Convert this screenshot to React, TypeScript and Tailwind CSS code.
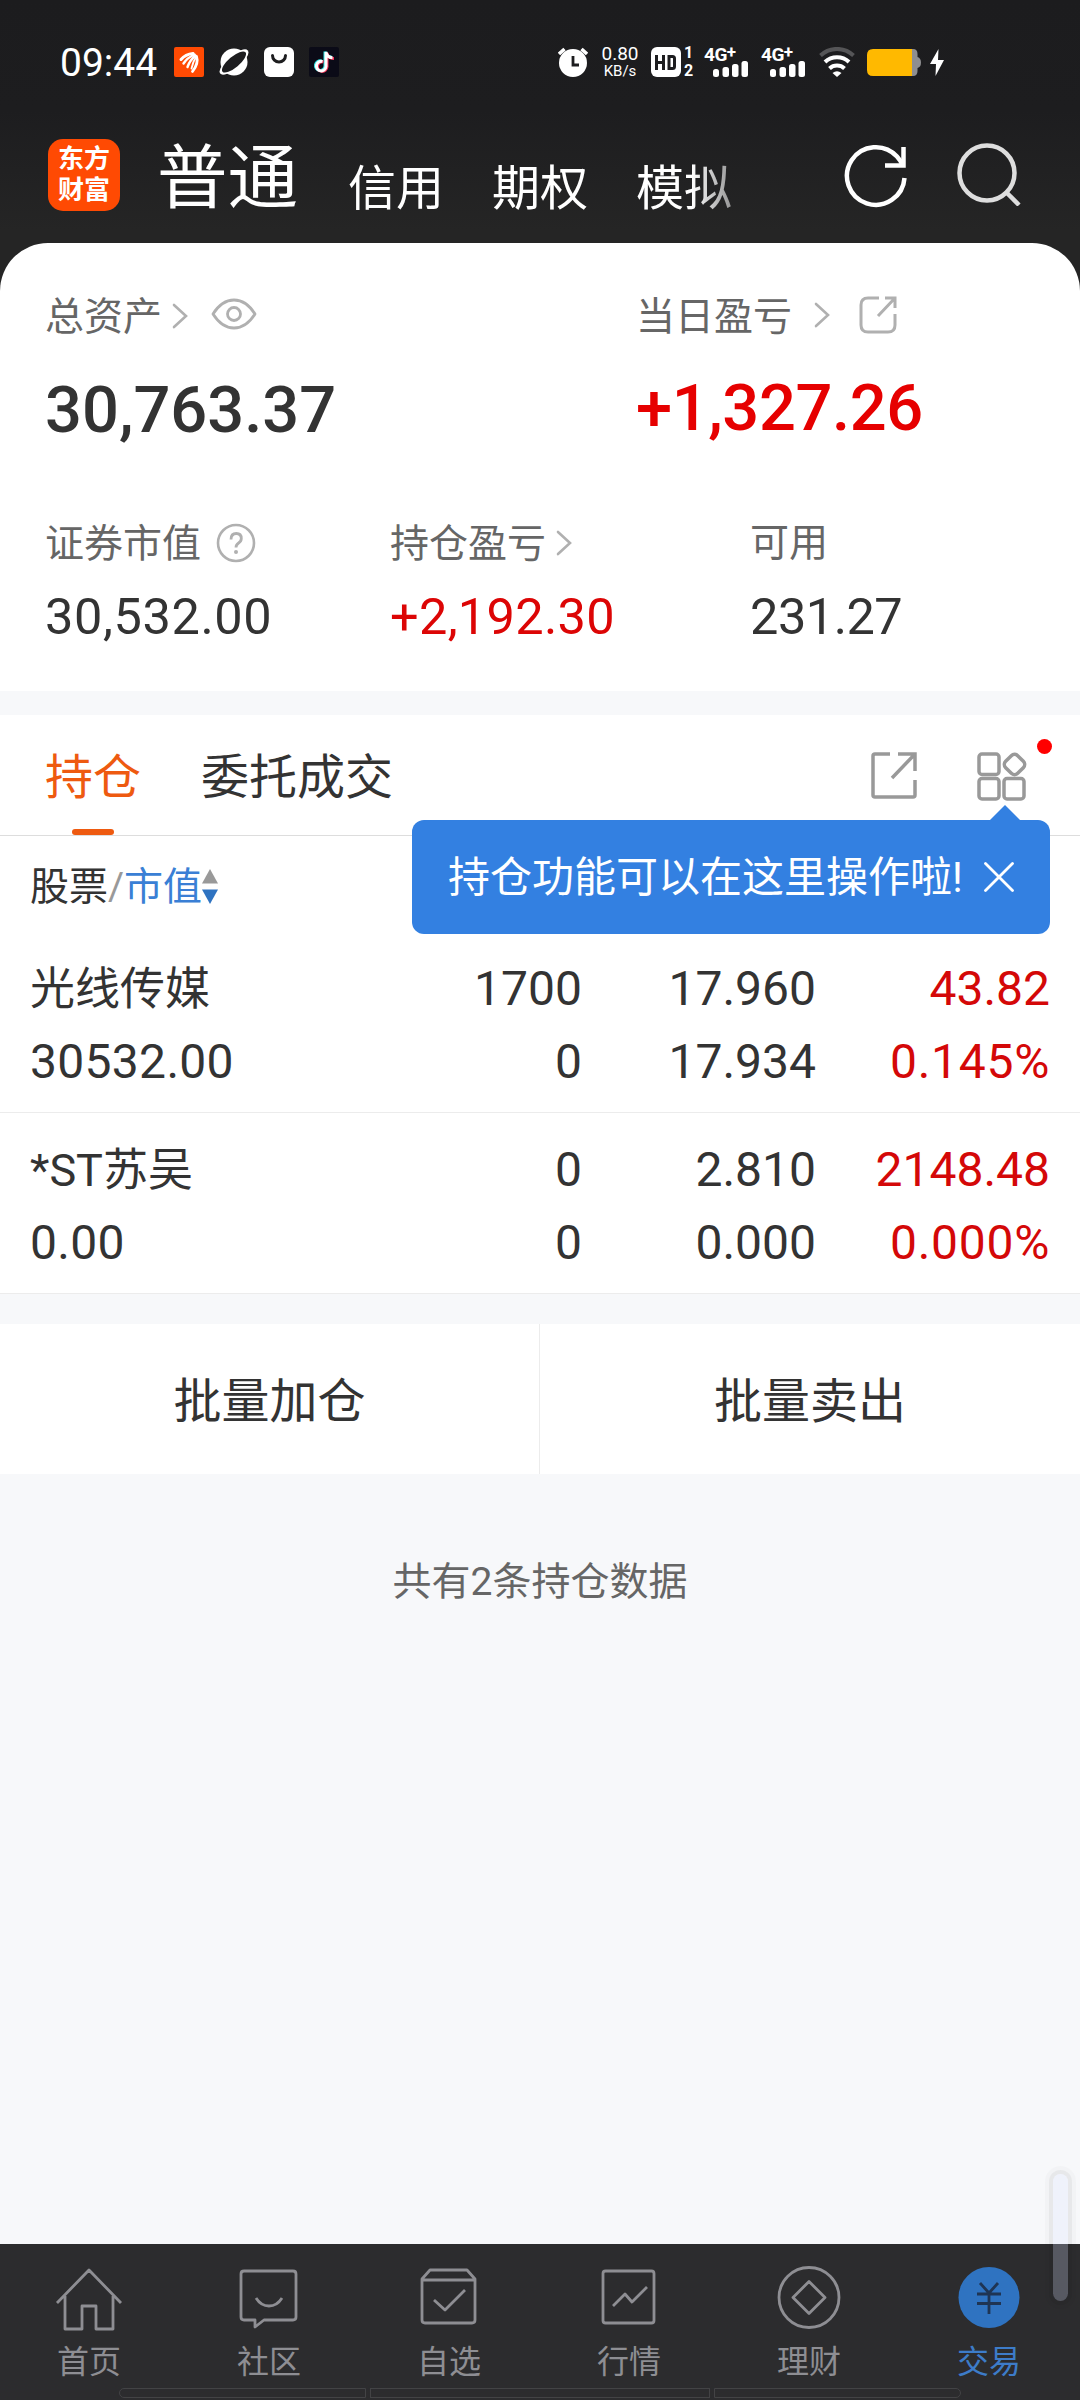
import { ReactNode } from 'react';
import clsx from 'clsx';

interface Holding {
  name: string;
  marketValue: string;
  amount: string;
  available: string;
  price: string;
  cost: string;
  profit: string;
  profitRate: string;
}

const holdings: Holding[] = [
  {
    name: '光线传媒',
    marketValue: '30532.00',
    amount: '1700',
    available: '0',
    price: '17.960',
    cost: '17.934',
    profit: '43.82',
    profitRate: '0.145%',
  },
  {
    name: '*ST苏吴',
    marketValue: '0.00',
    amount: '0',
    available: '0',
    price: '2.810',
    cost: '0.000',
    profit: '2148.48',
    profitRate: '0.000%',
  },
];

function ChevronRight({ className }: { className?: string }) {
  return (
    <svg className={className} width="16" height="26" viewBox="0 0 16 26" fill="none" stroke="#b0b0b0" strokeWidth="2.6" strokeLinecap="round">
      <path d="M2 2l12 11L2 24" />
    </svg>
  );
}

function SignalIcon() {
  return (
    <div className="flex w-[45px] h-[30px] flex-col">
      <span className="h-[14px] text-[19px] leading-[15px] font-bold tracking-[-0.5px]">
        4G<span className="relative -top-[3px] text-[17px]">+</span>
      </span>
      <svg className="ml-[9px]" width="36" height="16" viewBox="0 0 36 16" fill="#fff">
        <rect x="0" y="8" width="6" height="8" rx="2.5" />
        <rect x="9.5" y="6" width="6.5" height="10" rx="2.5" />
        <rect x="19" y="3" width="6.5" height="13" rx="2.5" />
        <rect x="28.500" y="0" width="6.500" height="16" rx="2.5" />
      </svg>
    </div>
  );
}

function StatusBar() {
  return (
    <div className="flex h-[124px] items-center pl-[60px] text-white">
      <span className="mt-[2px] w-[114px] text-[39px] leading-[40px]">09:44</span>
      <svg className="mr-[15px]" width="30" height="30" viewBox="0 0 30 30">
        <rect width="30" height="30" rx="2" fill="#ff4a03" />
        <g fill="none" stroke="#fff" strokeWidth="2.400" strokeLinecap="round">
          <path d="M7 12.500C10 9 14 7 19 6.500" strokeWidth="3" />
          <path d="M9.500 16.500C12 12.500 16 9.500 20.500 7.500" />
          <path d="M13.500 20C15 15.500 18 11.500 21.500 8.500" />
          <path d="M18.500 24.500C22 20 24.500 15 22.500 9.500" strokeWidth="2.800" />
          <path d="M17.500 21.500C18.500 17 20 13 22 10" strokeWidth="1.800" />
        </g>
      </svg>
      <svg className="mr-[15px]" width="30" height="30" viewBox="0 0 30 30">
        <circle cx="15" cy="15" r="13.500" fill="#fff" />
        <g transform="rotate(-40 15 15)">
          <ellipse cx="15" cy="15" rx="18" ry="6.500" fill="#fff" />
          <ellipse cx="15" cy="15" rx="15" ry="5.500" fill="#1d1d1f" />
        </g>
      </svg>
      <svg className="mr-[15px]" width="30" height="30" viewBox="0 0 30 30">
        <rect width="30" height="30" rx="6" fill="#fff" />
        <path d="M8.500 8.500a6.500 6.500 0 0 0 13 0" fill="none" stroke="#1d1d1f" strokeWidth="3" strokeLinecap="round" />
      </svg>
      <svg width="30" height="30" viewBox="0 0 30 30" fill="none" strokeWidth="3">
        <rect width="30" height="30" rx="2" fill="#0b0b17" />
        <path d="M12.500 14a4.800 4.800 0 1 0 3.500 5V4.500c.5 3.500 3 5.500 6.500 5.500" stroke="#35e4e4" />
        <path d="M14.500 15a4.800 4.800 0 1 0 3.500 5V6c.5 3.500 3 5.500 7 5.500" stroke="#f5375b" />
        <path d="M13.500 14.500a4.800 4.800 0 1 0 3.500 5V5c.5 3.500 3 5.500 6.500 5.700" stroke="#fff" />
      </svg>

      <svg className="ml-[219px]" width="30" height="30" viewBox="0 0 30 30" fill="none" stroke="#fff">
        <circle cx="15" cy="16" r="14" fill="#fff" stroke="none" />
        <path d="M1 7l5.500-5M29 7l-5.500-5" strokeWidth="3.500" />
        <path d="M15 9v9h6" stroke="#1d1d1f" strokeWidth="2.800" />
      </svg>
      <div className="ml-[12px] flex w-[40px] flex-col items-center">
        <span className="text-[19px] leading-[18px]">0.80</span>
        <span className="text-[15px] leading-[17px]">KB/s</span>
      </div>
      <div className="ml-[11px] flex h-[30px] w-[30px] items-center justify-center rounded-[6px] bg-white">
        <svg width="22" height="15" viewBox="0 0 22 15" fill="none" stroke="#1d1d1f" strokeWidth="3">
          <path d="M1.500 0v15M8.500 0v15M1.500 7.500h7M14 1.500h3.500q2 0 2 2v8q0 2-2 2H14z" />
        </svg>
      </div>
      <div className="ml-[2px] flex w-[11px] flex-col items-center text-[16px] leading-[18px] font-bold">
        <span>1</span>
        <span>2</span>
      </div>
      <div className="ml-[10px] flex gap-[12px]">
        <SignalIcon />
        <SignalIcon />
      </div>
      <svg className="ml-[13px]" width="36" height="30" viewBox="0 0 36 30" fill="none" strokeWidth="4">
        <path d="M1.500 8.500a24 24 0 0 1 33 0" stroke="#555557" />
        <path d="M6 15a17.500 17.500 0 0 1 24 0" stroke="#fff" />
        <path d="M10.500 21.500a11 11 0 0 1 15 0" stroke="#fff" />
        <path d="M13.500 26q4.500-3.500 9 0L18 30z" fill="#fff" />
      </svg>
      <svg className="ml-[12px]" width="54" height="27" viewBox="0 0 54 27">
        <path d="M44 0h2q4.500 0 4.500 5v3q3.500 1 3.500 5.500T50.500 19v3q0 5-4.500 5h-2z" fill="#8e8e90" />
        <path d="M6 0h39v27H6q-6 0-6-6V6q0-6 6-6z" fill="#ffb900" />
      </svg>
      <svg className="ml-[9px]" width="14" height="27" viewBox="0 0 14 27" fill="#fff">
        <path d="M8.500 0L0 15h6L5.500 27 14 11H8z" />
      </svg>
    </div>
  );
}

function Header() {
  return (
    <div className="flex h-[119px] pl-[48px] text-white">
      <div className="mt-[15px] flex h-[72px] w-[72px] flex-col items-center justify-center rounded-[15px] bg-[#ff4a03] text-[26px] leading-[31px] font-bold">
        <span>东方</span>
        <span>财富</span>
      </div>
      <div className="ml-[37px] flex w-[612px] whitespace-nowrap [mask-image:linear-gradient(to_right,#000_535px,rgba(0,0,0,0.5)_576px,transparent_600px)]">
        <span className="mt-[14px] text-[70.500px] leading-[82px]">普通</span>
        <span className="mt-[34px] ml-[50px] text-[48px] leading-[62px]">信用</span>
        <span className="mt-[34px] ml-[48px] text-[48px] leading-[62px]">期权</span>
        <span className="mt-[34px] ml-[48px] text-[48px] leading-[62px]">模拟</span>
      </div>
      <svg className="mt-[20px] ml-[75px]" width="64" height="66" viewBox="0 0 64 66" fill="none" stroke="#fff" strokeWidth="4.500">
        <path d="M60.500 34A28.800 28.800 0 1 1 53 12.500Q57 17 58.500 21" />
        <path d="M59.500 3v18.500H41" />
      </svg>
      <svg className="mt-[18px] ml-[49px]" width="64" height="64" viewBox="0 0 64 64" fill="none" stroke="#dedede" strokeWidth="4.500">
        <circle cx="30" cy="31" r="27.500" />
        <path d="M49 50l13 13" />
      </svg>
    </div>
  );
}

function Summary() {
  return (
    <div className="h-[448px] rounded-t-[48px] bg-white pt-[48px] pl-[45px] text-[#333]">
      <div className="flex">
        <div className="w-[591px]">
          <div className="flex h-[48px] items-center text-[39px] leading-[48px] text-[#666]">
            <span className="mt-[3px]">总资产</span>
            <ChevronRight className="mt-[2px] ml-[10px]" />
            <svg className="ml-[23px] -mt-[3px]" width="46" height="32" viewBox="0 0 46 32" fill="none" stroke="#b0b0b0" strokeWidth="2.800">
              <path d="M2 16C8 6.500 15 2 23 2s15 4.500 21 14c-6 9.500-13 14-21 14S8 25.500 2 16z" strokeLinejoin="round" />
              <circle cx="23" cy="16" r="6.500" />
            </svg>
          </div>
          <div className="mt-[31px] text-[65px] leading-[80px] font-medium">30,763.37</div>
        </div>
        <div>
          <div className="flex h-[48px] items-center text-[39px] leading-[48px] text-[#666]">
            <span className="mt-[3px]">当日盈亏</span>
            <ChevronRight className="ml-[22px]" />
            <svg className="ml-[29px]" width="38" height="38" viewBox="0 0 38 38" fill="none" stroke="#b0b0b0" strokeWidth="3">
              <path d="M20 2H9Q2 2 2 9v20q0 7 7 7h20q7 0 7-7V18" />
              <path d="M26 2h10v10M36 2L19 20" />
            </svg>
          </div>
          <div className="mt-[29px] text-[65px] leading-[80px] font-medium tracking-[-0.4px] text-[#e60000]">+1,327.26</div>
        </div>
      </div>
      <div className="mt-[69px] flex">
        <div className="w-[345px]">
          <div className="flex h-[48px] items-center text-[39px] leading-[48px] text-[#666]">
            <span className="mt-[1px]">证券市值</span>
            <svg className="ml-[15px]" width="40" height="40" viewBox="0 0 40 40" fill="none" stroke="#b0b0b0" strokeWidth="2.600">
              <circle cx="20" cy="20" r="18" />
              <path d="M15 16.500q0-6 5.300-6 5 0 5 5 0 2.800-2.700 4.500-2.600 1.700-2.600 4.500" strokeWidth="2.800" />
              <circle cx="20" cy="29" r="2" fill="#b0b0b0" stroke="none" />
            </svg>
          </div>
          <div className="mt-[20px] text-[50.500px] leading-[60px] tracking-[0.6px]">30,532.00</div>
        </div>
        <div className="w-[360px]">
          <div className="flex h-[48px] items-center text-[39px] leading-[48px] text-[#666]">
            <span className="mt-[1px]">持仓盈亏</span>
            <ChevronRight className="ml-[10px]" />
          </div>
          <div className="mt-[20px] text-[50.500px] leading-[60px] tracking-[0.3px] text-[#dc0505]">+2,192.30</div>
        </div>
        <div>
          <div className="pt-[1px] text-[39px] leading-[47px] text-[#666]">可用</div>
          <div className="mt-[20px] text-[50.500px] leading-[60px] tracking-[-0.5px]">231.27</div>
        </div>
      </div>
    </div>
  );
}

function Tabs() {
  return (
    <div className="relative flex h-[121px] border-b border-[#dddddd] bg-white pl-[45px] text-[48px] leading-[125px] text-[#333]">
      <div className="flex w-[96px] flex-col text-[#ee5a10]">
        <span className="h-[114px]">持仓</span>
        <span className="ml-[27px] h-[6px] w-[42px] rounded-full bg-[#ee5a10]" />
      </div>
      <span className="ml-[60px]">委托成交</span>
      <svg className="mt-[37px] ml-[478px]" width="46" height="47" viewBox="0 0 46 47" fill="none" stroke="#999" strokeWidth="3.500">
        <path d="M19 2H4Q2 2 2 4v39q0 2 2 2h38q2 0 2-2V28" />
        <path d="M27 2h17v17M44 2L21 26" />
      </svg>
      <svg className="mt-[37px] ml-[60px]" width="50" height="49" viewBox="0 0 50 49" fill="none" stroke="#999" strokeWidth="3.500">
        <rect x="2" y="2" width="20" height="20.500" rx="3" />
        <rect x="2" y="26.500" width="20" height="20.500" rx="3" />
        <rect x="27" y="26.500" width="20" height="20.500" rx="3" />
        <rect x="29" y="4" width="17" height="17" rx="4.500" transform="rotate(45 37.500 12.500)" />
      </svg>
      <span className="mt-[24px] ml-[10px] h-[15px] w-[15px] rounded-full bg-[#ff0000]" />

      {/* guide bubble pointing at the grid icon */}
      <div className="absolute top-[90px] right-[30px] z-10 flex w-[638px] flex-col items-end">
        <svg className="mr-[30px]" width="30" height="15" viewBox="0 0 30 15" fill="#3380e1">
          <path d="M0 15L15 0l15 15z" />
        </svg>
        <div className="flex h-[114px] w-full items-center rounded-[12px] bg-[#3380e1] pl-[36px] text-[42px] leading-[60px] text-white">
          <span className="mt-[1px] w-[524px] whitespace-nowrap">持仓功能可以在这里操作啦!</span>
          <svg className="ml-[12px]" width="30" height="30" viewBox="0 0 30 30" fill="none" stroke="#fff" strokeWidth="2.800" strokeLinecap="round">
            <path d="M1.500 1.500l27 27M28.500 1.500l-27 27" />
          </svg>
        </div>
      </div>
    </div>
  );
}

function Cell({ top, bottom, className }: { top: string; bottom: string; className?: string }) {
  return (
    <div className={clsx('flex flex-col text-[48px] leading-[73px]', className)}>
      <span>{top}</span>
      <span className={clsx(bottom.endsWith('%') && 'tracking-[0.7px]')}>{bottom}</span>
    </div>
  );
}

function HoldingRow({ item }: { item: Holding }) {
  return (
    <div className="flex h-[181px] border-b border-[#ececec] bg-white px-[30px] pt-[20px] text-[#333]">
      <div className="flex w-[318px] flex-col">
        <span className="h-[73px] text-[45px] leading-[75px]">{item.name}</span>
        <span className="text-[48px] leading-[73px] tracking-[0.3px]">{item.marketValue}</span>
      </div>
      <Cell className="w-[234px] text-right" top={item.amount} bottom={item.available} />
      <Cell className="w-[234px] text-right" top={item.price} bottom={item.cost} />
      <Cell className="w-[234px] text-right text-[#d40808]" top={item.profit} bottom={item.profitRate} />
    </div>
  );
}

function NavItem({ label, active, children }: { label: string; active?: boolean; children: ReactNode }) {
  return (
    <div className={clsx('flex w-[180px] flex-col items-center pt-[20px]', active ? 'text-[#3d7cc9]' : 'text-[#8e8e93]')}>
      <svg width="68" height="68" viewBox="0 0 68 68" fill="none" stroke="currentColor" strokeWidth="2.800" strokeLinejoin="round">
        {children}
      </svg>
      <span className="mt-[8px] text-[32px] leading-[44px]">{label}</span>
    </div>
  );
}

function BottomNav() {
  return (
    <div className="flex h-[156px] flex-col bg-[#2c2c2e]">
      <div className="-ml-[1px] flex h-[144px]">
        <NavItem label="首页">
          <path d="M2 39L34 6l32 33M10 32v33h17V42h14v23h17V32" />
        </NavItem>
        <NavItem label="社区">
          <path d="M9 7h49q3 0 3 3v43q0 3-3 3H29l-9 7v-7H9q-3 0-3-3V10q0-3 3-3z" />
          <path d="M21 34q5 8 13 8t13-8" />
        </NavItem>
        <NavItem label="自选">
          <path d="M7 15l8-9h37l8 9v41q0 3-3 3H10q-3 0-3-3zM7 16h53" />
          <path d="M19 36l11 10 20-20" />
        </NavItem>
        <NavItem label="行情">
          <rect x="8" y="7" width="51" height="52" rx="2.500" />
          <path d="M18 42l12-12 7 8 15-15" />
        </NavItem>
        <NavItem label="理财">
          <circle cx="34" cy="33.500" r="30" />
          <path d="M34 17.500l16 16-16 16-16-16z" />
        </NavItem>
        <NavItem label="交易" active>
          <circle cx="34" cy="33.500" r="30.500" fill="#2f73c1" stroke="none" />
          <path d="M25 19l9 10 9-10M34 29v21M22 30h24M22 39.500h24" stroke="#1f3554" />
        </NavItem>
      </div>
      <div className="flex h-[10px] gap-[4px] pl-[119px]">
        <span className="w-[247px] rounded-l-[5px] border border-[#434345]" />
        <span className="w-[340px] border border-[#434345]" />
        <span className="w-[247px] rounded-r-[5px] border border-[#434345]" />
      </div>
    </div>
  );
}

export default function App() {
  return (
    <div className="relative flex h-[2400px] w-[1080px] flex-col overflow-hidden bg-[#f7f8fa] font-['Roboto','Noto_Sans_CJK_SC',sans-serif]">
      <div className="bg-[linear-gradient(to_bottom,#1c1c1e_0px,#1d1d1f_110px,#252525_230px)]">
        <StatusBar />
        <Header />
        <Summary />
      </div>

      <div className="mt-[24px]">
        <Tabs />
        <div className="flex h-[96px] items-center bg-white pt-[5px] pl-[30px] text-[39px] leading-[48px] text-[#333]">
          股票
          <span className="w-[16px] text-center text-[#999]">/</span>
          <span className="text-[#3a7fd5]">市值</span>
          <svg width="16" height="35" viewBox="0 0 16 35">
            <path d="M8 0l8 14.500H0z" fill="#999" />
            <path d="M8 35l8-14.500H0z" fill="#2f73c1" />
          </svg>
        </div>
        {holdings.map(item => (
          <HoldingRow key={item.name} item={item} />
        ))}
      </div>

      <div className="mt-[30px] flex h-[150px] bg-white text-center text-[48px] leading-[155px] text-[#333]">
        <span className="w-[540px] border-r border-[#ececec]">批量加仓</span>
        <span className="w-[540px]">批量卖出</span>
      </div>
      <p className="mt-[78px] text-center text-[39px] leading-[60px] text-[#666]">共有2条持仓数据</p>

      <div className="mt-auto">
        <BottomNav />
      </div>

      <div className="absolute top-[2174px] left-[1053px] h-[127px] w-[15px] rounded-full bg-[rgba(217,225,255,0.25)] shadow-[0_0_0_4px_rgba(0,0,0,0.045),0_0_0_8px_rgba(0,0,0,0.02)]" />
    </div>
  );
}
